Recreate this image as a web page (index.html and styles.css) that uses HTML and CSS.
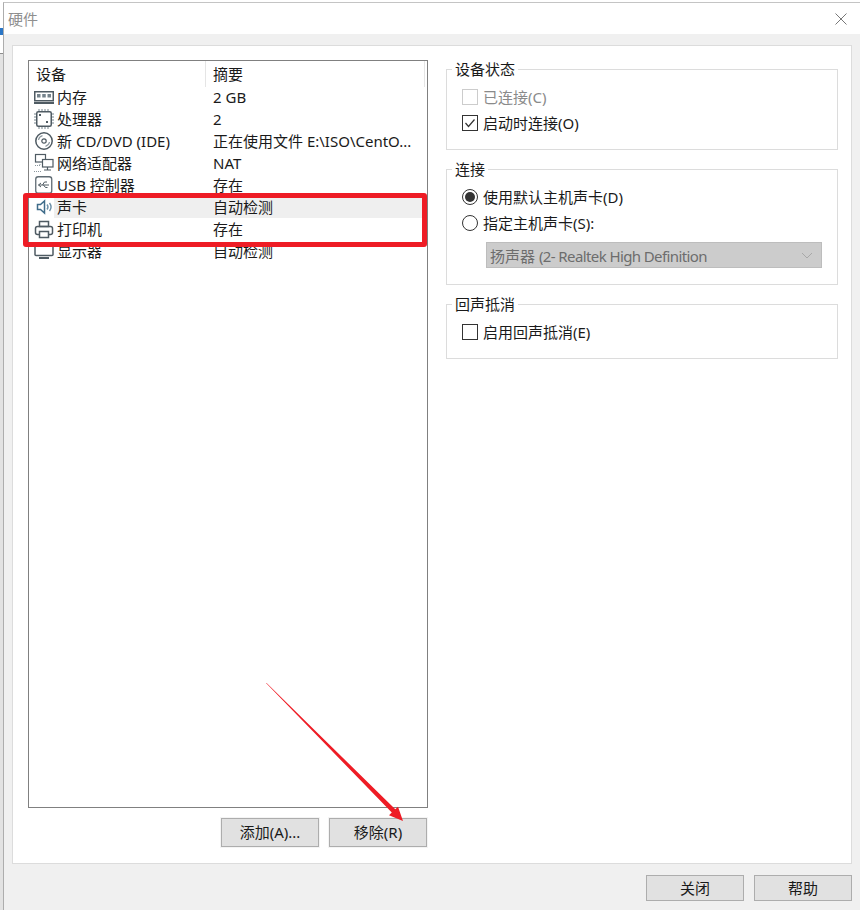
FILE: index.html
```html
<!DOCTYPE html>
<html lang="zh-CN">
<head>
<meta charset="utf-8">
<title>硬件</title>
<link rel="stylesheet" href="styles.css">
</head>
<body>
<div class="desktop">
  <div class="strip"><span class="strip-blue"></span><span class="strip-rest"></span></div>
  <div class="window">
    <header class="titlebar">
      <span class="title">硬件</span>
      <svg class="close" width="12" height="12" viewBox="0 0 12 12"><path d="M0.5 0.5L11.5 11.5M11.5 0.5L0.5 11.5" stroke="#777" fill="none"/></svg>
    </header>
    <div class="body">
      <main class="panel">
        <section class="left">
          <div class="list">
            <div class="list-head"><span class="hd-name">设备</span><span class="hd-sum">摘要</span></div>
            <div class="row">
              <svg class="ic" viewBox="0 0 20 20"><rect x="0.750" y="4.750" width="18.500" height="9" fill="none" stroke="#4f5b63" stroke-width="1.500"/><path d="M3 7h3.500v3.500H3zM8.250 7h3.500v3.500h-3.500zM13.500 7H17v3.500h-3.500z" fill="#75838c"/><path d="M0 16h20" stroke="#4f5b63" stroke-width="2"/></svg>
              <span class="name">内存</span><span class="sum">2 GB</span>
            </div>
            <div class="row">
              <svg class="ic" viewBox="0 0 20 20"><rect x="2.750" y="2.750" width="14.500" height="14.500" rx="1.500" fill="none" stroke="#4f5b63" stroke-width="1.500"/><path d="M5 0v2M8 0v2M11 0v2M14 0v2M5 18v2M8 18v2M11 18v2M14 18v2M0 5h2M0 8h2M0 11h2M0 14h2M18 5h2M18 8h2M18 11h2M18 14h2" stroke="#75838c"/><path d="M5 5h2v2H5zM12 12h2v2h-2z" fill="#4f5b63"/></svg>
              <span class="name">处理器</span><span class="sum">2</span>
            </div>
            <div class="row">
              <svg class="ic" viewBox="0 0 20 20"><circle cx="10" cy="10" r="8.200" fill="none" stroke="#4f5b63" stroke-width="1.500"/><circle cx="10" cy="10" r="2.200" fill="none" stroke="#4f5b63" stroke-width="1.200"/><path d="M4.500 9A5.500 5.500 0 0 1 8.500 4.700M15.500 11A5.500 5.500 0 0 1 11.500 15.300" fill="none" stroke="#8b979e" stroke-width="1.200"/></svg>
              <span class="name">新 CD/DVD (IDE)</span><span class="sum">正在使用文件 E:\ISO\CentO...</span>
            </div>
            <div class="row">
              <svg class="ic" viewBox="0 0 20 20"><rect x="1.500" y="1.500" width="10" height="7.500" fill="none" stroke="#4f5b63" stroke-width="1.200"/><rect x="8.500" y="6.500" width="10.500" height="7.500" fill="#fff" stroke="#4f5b63" stroke-width="1.200"/><path d="M13.500 14v2.500M10 17h7" stroke="#4f5b63" stroke-width="1.200"/><path d="M6 9v3.500M1 12.500h5M0 18.500h8" stroke="#8b979e" stroke-dasharray="1 1"/></svg>
              <span class="name">网络适配器</span><span class="sum">NAT</span>
            </div>
            <div class="row">
              <svg class="ic" viewBox="0 0 20 20"><rect x="1.750" y="1.750" width="16" height="16.500" rx="2.500" fill="none" stroke="#5f6b73" stroke-width="1.300"/><path d="M4.500 10H15M4.500 10l2.500-2M4.500 10l2.500 2M8.500 10l2-3H13M9.500 10l2 2.500h2" fill="none" stroke="#4f5b63"/></svg>
              <span class="name">USB 控制器</span><span class="sum">存在</span>
            </div>
            <div class="row row-on">
              <svg class="ic" viewBox="0 0 20 20"><path d="M3.500 7.500h3l4-3.500v12l-4-3.500h-3z" fill="none" stroke="#3f6c8a" stroke-width="1.500"/><path d="M13 7.500a4 4 0 0 1 0 5M15.500 6a6.500 6.500 0 0 1 0 8" fill="none" stroke="#6c90a8" stroke-width="1.400"/></svg>
              <span class="name">声卡</span><span class="sum">自动检测</span>
            </div>
            <div class="row">
              <svg class="ic" viewBox="0 0 20 20"><rect x="5.500" y="2.500" width="9" height="5" fill="none" stroke="#4f5b63" stroke-width="1.500"/><rect x="1.500" y="7.500" width="17" height="8" rx="2" fill="none" stroke="#4f5b63" stroke-width="1.500"/><rect x="5.500" y="12.500" width="9" height="6" fill="#fff" stroke="#4f5b63" stroke-width="1.500"/></svg>
              <span class="name">打印机</span><span class="sum">存在</span>
            </div>
            <div class="row">
              <svg class="ic" viewBox="0 0 20 20"><rect x="1" y="2" width="18" height="12.500" rx="1" fill="none" stroke="#4f5b63" stroke-width="1.500"/><path d="M5 17h10" stroke="#4f5b63" stroke-width="2"/></svg>
              <span class="name">显示器</span><span class="sum">自动检测</span>
            </div>
          </div>
          <div class="list-actions">
            <button class="btn" type="button">添加(A)...</button>
            <button class="btn" type="button">移除(R)</button>
          </div>
        </section>
        <aside class="right">
          <fieldset class="group group-status">
            <legend>设备状态</legend>
            <div class="opt opt-disabled"><span class="box box-disabled"></span>已连接(C)</div>
            <div class="opt"><span class="box"><svg width="14" height="14" viewBox="0 0 14 14"><path d="M2.500 7L5.500 10.500L11.500 3.500" fill="none" stroke="#333" stroke-width="1.200"/></svg></span>启动时连接(O)</div>
          </fieldset>
          <fieldset class="group group-conn">
            <legend>连接</legend>
            <div class="opt"><span class="radio radio-on"></span>使用默认主机声卡(D)</div>
            <div class="opt"><span class="radio"></span>指定主机声卡(S):</div>
            <div class="select"><span>扬声器 <span class="select-latin">(2- Realtek High Definition</span></span><svg width="12" height="7" viewBox="0 0 12 7"><path d="M1 1L6 6L11 1" fill="none" stroke="#a8a8a8"/></svg></div>
          </fieldset>
          <fieldset class="group group-echo">
            <legend>回声抵消</legend>
            <div class="opt"><span class="box"></span>启用回声抵消(E)</div>
          </fieldset>
        </aside>
      </main>
      <footer class="foot">
        <button class="btn btn-foot" type="button">关闭</button>
        <button class="btn btn-foot" type="button">帮助</button>
      </footer>
    </div>
  </div>
</div>
<div class="mark-box"></div>
<svg class="mark-arrow" width="860" height="910" viewBox="0 0 860 910"><polygon points="266,683 266.600,683 395.300,809.300 398,806.800 403,821 389,815.300 391.800,812.600" fill="#ee1c25"/></svg>
</body>
</html>
```
FILE: styles.css
```css
* { box-sizing: border-box; }
html, body { margin: 0; padding: 0; }
body {
  width: 860px;
  height: 910px;
  overflow: hidden;
  position: relative;
  background: #fff;
  font-family: "Noto Sans", "Noto Sans CJK SC", sans-serif;
  font-size: 15px;
  color: #1a1a1a;
}
.desktop { display: flex; height: 910px; }
.strip { width: 3px; background: #fff; display: flex; flex-direction: column; flex: none; }
.strip-blue { height: 7px; margin-top: 28px; background: #2a76c6; }
.strip-rest { flex: 1; margin-top: 18px; background: #e2e2e2; border-top: 1px solid #8c8c8c; }
.window { flex: 1; display: flex; flex-direction: column; border-top: 1px solid #c4c4c4; border-left: 1px solid #adadad; margin-top: 2px; background: #fff; }
.titlebar { height: 31px; flex: none; display: flex; align-items: center; justify-content: space-between; padding: 0 13px 0 4px; background: #fff; }
.title { color: #8f8f8f; line-height: 20px; }
.body { flex: 1; display: flex; flex-direction: column; background: #f0f0f0; padding: 11px 8px 9px 8px; }
.panel { height: 819px; flex: none; display: flex; gap: 18px; padding: 14px 13px 15px 15px; background: #fff; border: 1px solid #dcdcdc; }
.left { width: 400px; flex: none; display: flex; flex-direction: column; }
.list { height: 748px; flex: none; border: 1px solid #808080; background: #fff; }
.list-head { height: 25px; display: grid; grid-template-columns: 177px 1fr; line-height: 26px; }
.hd-name { padding-left: 7px; border-right: 1px solid #e5e5e5; }
.hd-sum { padding-left: 7px; margin-right: 2px; border-right: 1px solid #e5e5e5; }
.row { height: 22px; display: grid; grid-template-columns: 25px 159px 1fr; align-items: stretch; line-height: 22px; white-space: nowrap; }
.ic { width: 20px; height: 20px; margin: 1px 0 0 5px; }
.name { padding-left: 3px; }
.row-on .name, .row-on .sum { background: #efefef; }
.list-actions { display: flex; justify-content: flex-end; gap: 10px; padding: 10px 1px 0 0; }
.btn { width: 98px; height: 29px; padding: 0 0 2px; background: #e1e1e1; border: 1px solid #adadad; outline: 1px solid #f4f4f4; font: inherit; color: #1a1a1a; line-height: 24px; }
.right { flex: 1; display: flex; flex-direction: column; gap: 9px; margin-top: -1px; }
.group { margin: 0; padding: 0 0 0 15px; border: 1px solid #dcdcdc; min-width: 0; flex: none; }
.group legend { margin-left: -10px; padding: 0 3px; line-height: 20px; height: 20px; }
.group-status { height: 91px; }
.group-conn { height: 126px; }
.group-echo { height: 65px; }
.opt { height: 26px; display: flex; align-items: center; gap: 5px; line-height: 20px; white-space: nowrap; }
.group-status .opt:first-of-type { margin-top: 5px; }
.group-conn .opt:first-of-type { margin-top: 5px; }
.group-echo .opt { margin-top: 5px; }
.opt-disabled { color: #8a8a8a; }
.box { width: 16px; height: 16px; flex: none; border: 1px solid #333; background: #fff; display: flex; align-items: center; justify-content: center; }
.box-disabled { border-color: #ccc; }
.radio { width: 16px; height: 16px; flex: none; border: 1px solid #333; border-radius: 50%; background: #fff; display: flex; align-items: center; justify-content: center; }
.radio-on::after { content: ""; width: 10px; height: 10px; border-radius: 50%; background: #333; }
.select { width: 336px; height: 26px; margin: 6px 0 0 24px; padding: 0 8px 0 3px; display: flex; align-items: center; justify-content: space-between; background: #ccc; border: 1px solid #bdbdbd; color: #6d6d6d; white-space: nowrap; }
.select-latin { letter-spacing: -0.6px; }
.foot { display: flex; justify-content: flex-end; gap: 10px; padding-top: 11px; }
.btn-foot { height: 26px; padding: 0; line-height: 24px; outline: none; }
.mark-box { position: absolute; left: 23px; top: 193px; width: 404px; height: 54px; border: 5px solid #ee1c25; border-radius: 3px; }
.mark-arrow { position: absolute; left: 0; top: 0; pointer-events: none; }
```
